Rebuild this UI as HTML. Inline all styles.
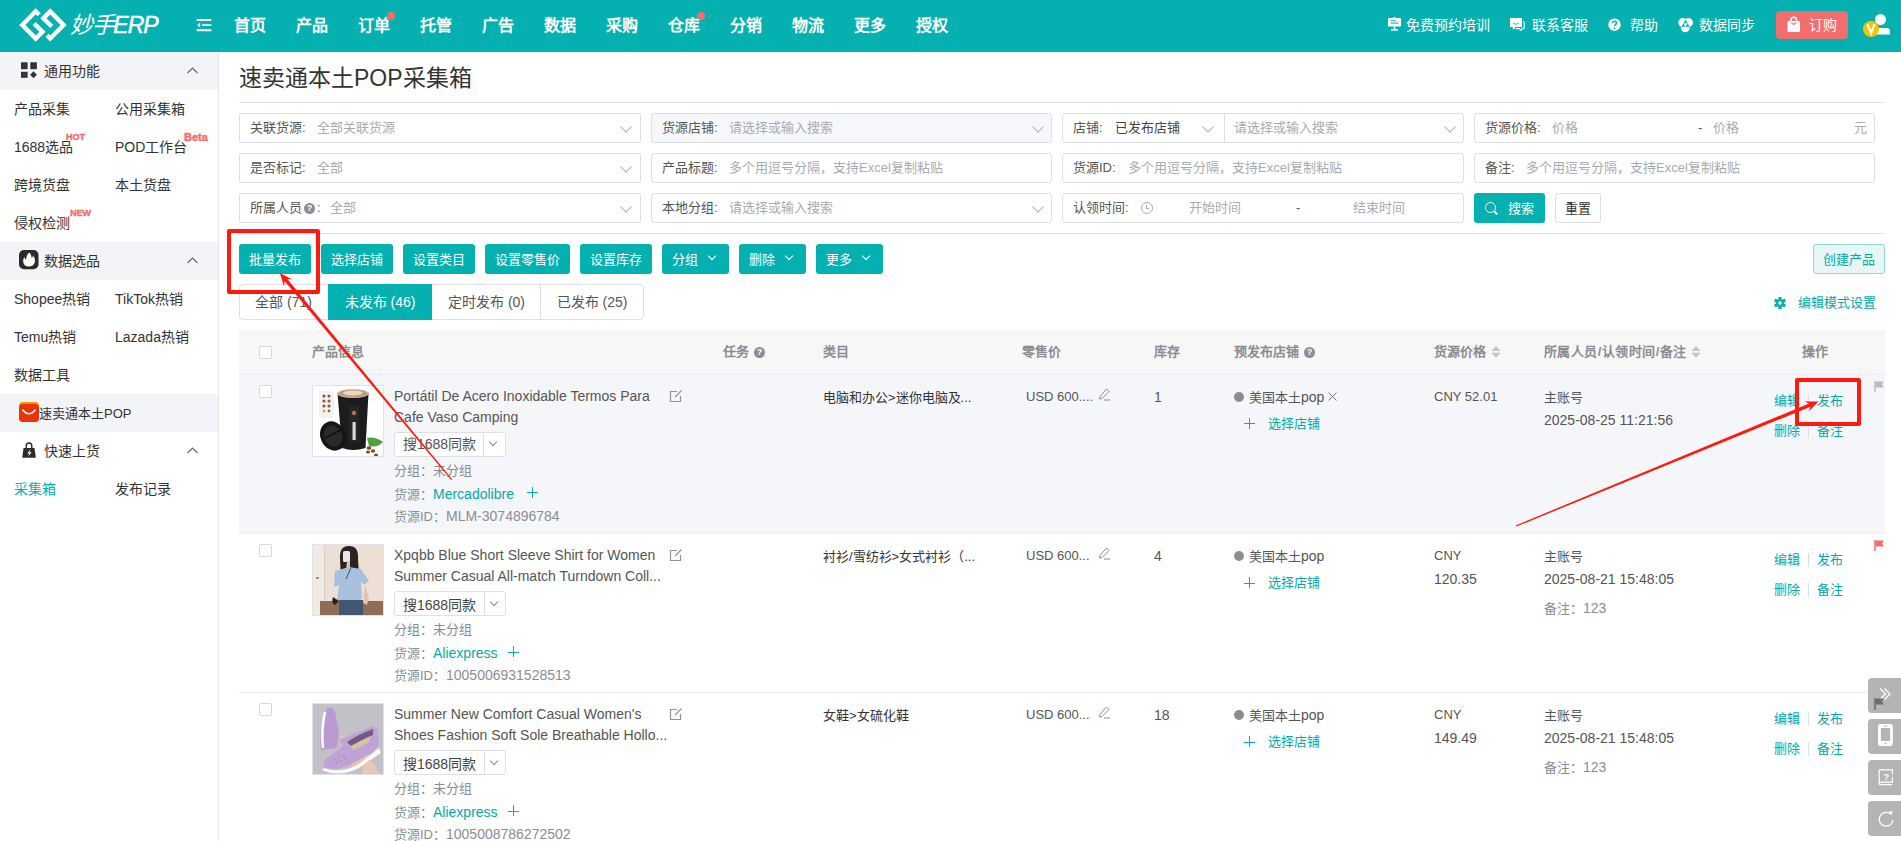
<!DOCTYPE html>
<html lang="zh-CN"><head><meta charset="utf-8">
<style>
*{box-sizing:border-box;margin:0;padding:0}
html,body{width:1901px;height:841px;overflow:hidden;background:#fff;font-family:"Liberation Sans",sans-serif;color:#333;font-size:14px}
.abs{position:absolute}
.t{position:absolute;white-space:nowrap;line-height:1}
#hdr{position:absolute;left:0;top:0;width:1901px;height:52px;background:#05b1b0}
.nav{position:absolute;top:18px;color:#fff;font-size:16px;font-weight:bold;line-height:16px}
.hr{position:absolute;top:18px;color:#fff;font-size:14px;line-height:14px}
#side{position:absolute;left:0;top:52px;width:219px;height:789px;border-right:1px solid #e4e6ec;background:#fff}
.sh{position:absolute;left:0;width:218px;height:38px;background:#f3f4f8}
.si{position:absolute;font-size:14px;line-height:14px;color:#333;white-space:nowrap}
.box{position:absolute;height:30px;border:1px solid #dcdfe6;border-radius:3px;background:#fff}
.lbl{position:absolute;top:7px;font-size:13px;line-height:14px;color:#555;white-space:nowrap}
.ph{position:absolute;top:7px;font-size:13px;line-height:14px;color:#a8abb2;white-space:nowrap}
.chev{position:absolute;top:9px;width:8px;height:8px;border-right:1px solid #b0b3b8;border-bottom:1px solid #b0b3b8;transform:rotate(45deg)}
.btn{position:absolute;top:244px;height:30px;background:#05b1b0;color:#fff;border-radius:3px;font-size:13px;line-height:32px;text-align:center;white-space:nowrap}
.tab{position:absolute;top:284px;height:36px;font-size:14px;line-height:36px;text-align:center;color:#555;white-space:nowrap}
.th{position:absolute;top:345px;font-size:13px;line-height:14px;color:#8a8d93;font-weight:bold;white-space:nowrap}
.cb{position:absolute;width:13px;height:13px;border:1px solid #d5d8de;border-radius:2px;background:#fff}
.c13{position:absolute;font-size:13px;line-height:14px;color:#333;white-space:nowrap}
.g13{position:absolute;font-size:13px;line-height:14px;color:#888;white-space:nowrap}
.tl{color:#05b1b0}
.fb{position:absolute;left:1868px;width:33px;height:35px;background:#b4b4b4;border-radius:4px 0 0 4px}
</style></head>
<body>
<!-- HEADER -->
<div id="hdr">
  <svg class="abs" style="left:0;top:0" width="80" height="52" viewBox="0 0 80 52"><g fill="none" stroke="#fff" stroke-width="4.4" stroke-linejoin="miter" stroke-miterlimit="10"><path d="M39.2,14.8 L35.7,11.3 L22.3,25 L35.7,38.6 L42.5,31.8 L34.2,23.5"/><path d="M47.1,35.4 L50.2,38.5 L63.6,25 L50.2,11.4 L43.4,18.2 L51.7,26.5"/></g></svg>
  <div class="t" style="left:70px;top:14px;color:#fff;font-size:23px;font-style:italic;letter-spacing:-1.4px">妙手<span style="-webkit-text-stroke:0.5px #fff;letter-spacing:-0.9px">ERP</span></div>
  <svg class="abs" style="left:196px;top:18px" width="16" height="14" viewBox="0 0 16 14"><g fill="#fff"><rect x="0.5" y="1" width="15" height="2" rx="0.8"/><rect x="6" y="6.2" width="9.5" height="1.8" rx="0.8"/><rect x="0.5" y="11.2" width="15" height="2" rx="0.8"/><path d="M1 7.1 L4.2 4.8 V9.4Z"/></g></svg>
  
  <div class="nav" style="left:234px">首页</div>
  <div class="nav" style="left:296px">产品</div>
  <div class="nav" style="left:358px">订单</div>
  <div class="abs" style="left:387px;top:12px;width:8px;height:8px;border-radius:50%;background:#f26d6d"></div>
  <div class="nav" style="left:420px">托管</div>
  <div class="nav" style="left:482px">广告</div>
  <div class="nav" style="left:544px">数据</div>
  <div class="nav" style="left:606px">采购</div>
  <div class="nav" style="left:668px">仓库</div>
  <div class="abs" style="left:697px;top:12px;width:8px;height:8px;border-radius:50%;background:#f26d6d"></div>
  <div class="nav" style="left:730px">分销</div>
  <div class="nav" style="left:792px">物流</div>
  <div class="nav" style="left:854px">更多</div>
  <div class="nav" style="left:916px">授权</div>

  <div class="abs" style="left:1776px;top:11px;width:72px;height:28px;background:#f26d6d;border-radius:4px"></div>

  <svg class="abs" style="left:1388px;top:17px" width="13" height="14" viewBox="0 0 13 14"><rect x="0" y="1" width="13" height="8.5" rx="1" fill="#fff"/><rect x="5.5" y="0" width="2" height="1.5" fill="#fff"/><rect x="2.5" y="3.2" width="5" height="1" fill="#05b1b0"/><rect x="2.5" y="5.6" width="8" height="1" fill="#05b1b0"/><rect x="5.7" y="9.5" width="1.6" height="3" fill="#fff"/><rect x="3" y="12" width="7" height="1.6" fill="#fff"/></svg>
  <svg class="abs" style="left:1509px;top:17px" width="17" height="15" viewBox="0 0 17 15"><path d="M14 4.2 Q15.2 4.4 15.2 5.8 V10.6 Q15.2 11.6 14.2 11.6 H13.2 L12.2 13.4 L10.2 11.6 H6.5" fill="none" stroke="#fff" stroke-width="1.1"/><path d="M1 1 H13 V10 H6.6 L4 13 L3.6 10 H1Z" fill="#fff"/><path d="M4.3 6.2 Q7 8.4 9.7 6.2" fill="none" stroke="#05b1b0" stroke-width="0.9"/></svg>
  <svg class="abs" style="left:1608px;top:18px" width="14" height="14" viewBox="0 0 14 14"><circle cx="6.5" cy="6.7" r="6.2" fill="#fff"/><path d="M4.6 5.2 Q4.6 3.3 6.5 3.3 Q8.4 3.3 8.4 5 Q8.4 6.2 7.2 6.8 Q6.5 7.2 6.5 8.2" fill="none" stroke="#05b1b0" stroke-width="1.5"/><circle cx="6.5" cy="10.1" r="0.9" fill="#05b1b0"/></svg>
  <svg class="abs" style="left:1677px;top:18px" width="17" height="15" viewBox="0 0 17 15"><g fill="#fff"><circle cx="5.8" cy="4.6" r="4.5"/><circle cx="11.5" cy="4.6" r="4.5"/><circle cx="8.3" cy="9.8" r="4.4"/></g><path d="M8.5 1.8 L12.7 8.8 H4.3Z" fill="#05b1b0"/><path d="M8.5 8.8 L6.4 5.3 H10.6Z" fill="#fff"/></svg>
  <svg class="abs" style="left:1787px;top:16px" width="14" height="17" viewBox="0 0 14 17"><rect x="0.5" y="5" width="12.5" height="11" rx="0.8" fill="#fff"/><path d="M4 5.5 V4 Q4 1.2 6.75 1.2 Q9.5 1.2 9.5 4 V5.5" fill="none" stroke="#fff" stroke-width="1.6"/><path d="M4.3 6.5 Q6.75 10 9.2 6.5" fill="none" stroke="#f26d6d" stroke-width="1.3"/></svg>
  <svg class="abs" style="left:1862px;top:12px" width="30" height="28" viewBox="0 0 30 28"><circle cx="18.5" cy="7.5" r="5.5" fill="#fff"/><path d="M14.5 16 H25 Q28 16 28 19.5 V22.5 H14.5Z" fill="#fff"/><circle cx="9" cy="17" r="8" fill="#f6c400"/><path d="M5.5 12.2 L9 21.5 L12.5 12.2" fill="none" stroke="#fff" stroke-width="2.2" stroke-linejoin="miter"/></svg>
  <div class="hr" style="left:1406px">免费预约培训</div>
  <div class="hr" style="left:1532px">联系客服</div>
  <div class="hr" style="left:1630px">帮助</div>
  <div class="hr" style="left:1699px">数据同步</div>
  <div class="hr" style="left:1809px">订购</div>
</div>

<!-- SIDEBAR -->
<div id="side">
  <div class="sh" style="top:0"></div>

  <div class="si" style="left:44px;top:12px">通用功能</div>
  <div class="si" style="left:14px;top:50px">产品采集</div>
  <div class="si" style="left:115px;top:50px">公用采集箱</div>
  <div class="si" style="left:14px;top:88px">1688选品</div>
  <div class="si" style="left:115px;top:88px">POD工作台</div>
  <div class="si" style="left:14px;top:126px">跨境货盘</div>
  <div class="si" style="left:115px;top:126px">本土货盘</div>
  <div class="si" style="left:14px;top:164px">侵权检测</div>
  <div class="sh" style="top:190px"></div>
  <div class="si" style="left:44px;top:202px">数据选品</div>
  <div class="si" style="left:14px;top:240px">Shopee热销</div>
  <div class="si" style="left:115px;top:240px">TikTok热销</div>
  <div class="si" style="left:14px;top:278px">Temu热销</div>
  <div class="si" style="left:115px;top:278px">Lazada热销</div>
  <div class="si" style="left:14px;top:316px">数据工具</div>
  <div class="sh" style="top:342px"></div>
  <div class="si" style="left:39px;top:355px;font-size:13px">速卖通本土POP</div>
  <div class="si" style="left:44px;top:392px">快速上货</div>
  <div class="si tl" style="left:14px;top:430px">采集箱</div>
  <div class="si" style="left:115px;top:430px">发布记录</div>

  <svg class="abs" style="left:21px;top:10px" width="16" height="16" viewBox="0 0 16 16"><rect x="0" y="0.3" width="6.6" height="6.9" fill="#333"/><rect x="9.3" y="0.3" width="6.6" height="6.9" fill="#333"/><rect x="0" y="9.8" width="6.6" height="6" fill="#333"/><path d="M12.5 9.3 L15.9 12.8 L12.5 16.2 L9.1 12.8Z" fill="#333"/></svg>
  <svg class="abs" style="left:19px;top:198px" width="20" height="20" viewBox="0 0 20 20"><rect x="0" y="0" width="19.5" height="19.3" rx="5" fill="#2b2b2b"/><path d="M10.5 2.5 Q13 6 12.5 8 Q14 7 14 5.5 Q17 9 15.5 13 Q14 16.5 9.8 16.5 Q5.5 16.5 4.5 13 Q3.5 9.5 5.5 7 Q5.5 9 7 9.5 Q7 5 10.5 2.5Z" fill="#fff"/></svg>
  <svg class="abs" style="left:19px;top:350px" width="20" height="20" viewBox="0 0 20 20"><rect x="0" y="0" width="20" height="20" rx="4" fill="#ff9a00"/><rect x="0" y="2" width="20" height="18" rx="4" fill="#e8340a"/><path d="M3.5 7.5 Q10 16 16.5 7.5" fill="none" stroke="#fff" stroke-width="1.6"/></svg>
  <svg class="abs" style="left:22px;top:390px" width="14" height="16" viewBox="0 0 14 16"><path d="M4.2 6 V4 Q4.2 1 7 1 Q9.8 1 9.8 4 V6" fill="none" stroke="#2b2b2b" stroke-width="1.4"/><path d="M1.5 6 H12.5 L13.8 15.8 H0.2Z" fill="#2b2b2b"/><path d="M8.6 7 L5.2 11.6 H7.4 L6 15 L9.6 10.2 H7.4Z" fill="#fff"/></svg>
  <svg class="abs" style="left:187px;top:15px" width="11" height="7" viewBox="0 0 11 7"><path d="M0.5 6 L5.5 1 L10.5 6" fill="none" stroke="#666" stroke-width="1.1"/></svg>
  <svg class="abs" style="left:187px;top:205px" width="11" height="7" viewBox="0 0 11 7"><path d="M0.5 6 L5.5 1 L10.5 6" fill="none" stroke="#666" stroke-width="1.1"/></svg>
  <svg class="abs" style="left:187px;top:395px" width="11" height="7" viewBox="0 0 11 7"><path d="M0.5 6 L5.5 1 L10.5 6" fill="none" stroke="#666" stroke-width="1.1"/></svg>
  <div class="abs" style="left:66px;top:81px;font-size:9px;line-height:9px;font-weight:bold;color:#f56c6c;white-space:nowrap;-webkit-text-stroke:0.4px #f56c6c">HOT</div>
  <div class="abs" style="left:184px;top:80px;font-size:11px;line-height:11px;font-weight:bold;color:#f56c6c;white-space:nowrap;-webkit-text-stroke:0.4px #f56c6c">Beta</div>
  <div class="abs" style="left:70px;top:157px;font-size:9px;line-height:9px;font-weight:bold;color:#f56c6c;white-space:nowrap;-webkit-text-stroke:0.4px #f56c6c">NEW</div>
</div>

<!-- MAIN -->
<div class="t" style="left:239px;top:67px;font-size:23px;color:#333">速卖通本土POP采集箱</div>
<div class="abs" style="left:239px;top:102px;width:1646px;height:1px;background:#dfe2e8"></div>


<!-- FILTERS -->
<div class="box" style="left:239px;top:113px;width:402px"><div class="lbl" style="left:10px">关联货源:</div><div class="ph" style="left:77px">全部关联货源</div><div class="chev" style="left:382px"></div></div>
<div class="box" style="left:651px;top:113px;width:401px;background:#f5f7fa"><div class="lbl" style="left:10px">货源店铺:</div><div class="ph" style="left:77px">请选择或输入搜索</div><div class="chev" style="left:382px"></div></div>
<div class="box" style="left:1062px;top:113px;width:402px"><div class="lbl" style="left:10px">店铺:</div><div class="lbl" style="left:52px;color:#444">已发布店铺</div><div class="chev" style="left:141px"></div><div class="abs" style="left:161px;top:0;width:1px;height:28px;background:#dcdfe6"></div><div class="ph" style="left:171px">请选择或输入搜索</div><div class="chev" style="left:383px"></div></div>
<div class="box" style="left:1474px;top:113px;width:401px"><div class="lbl" style="left:10px">货源价格:</div><div class="ph" style="left:77px">价格</div><div class="lbl" style="left:223px;color:#555">-</div><div class="ph" style="left:238px">价格</div><div class="ph" style="left:379px">元</div></div>

<div class="box" style="left:239px;top:153px;width:402px"><div class="lbl" style="left:10px">是否标记:</div><div class="ph" style="left:77px">全部</div><div class="chev" style="left:382px"></div></div>
<div class="box" style="left:651px;top:153px;width:401px"><div class="lbl" style="left:10px">产品标题:</div><div class="ph" style="left:77px">多个用逗号分隔，支持Excel复制粘贴</div></div>
<div class="box" style="left:1062px;top:153px;width:402px"><div class="lbl" style="left:10px">货源ID:</div><div class="ph" style="left:65px">多个用逗号分隔，支持Excel复制粘贴</div></div>
<div class="box" style="left:1474px;top:153px;width:401px"><div class="lbl" style="left:10px">备注:</div><div class="ph" style="left:51px">多个用逗号分隔，支持Excel复制粘贴</div></div>

<div class="box" style="left:239px;top:193px;width:402px"><div class="lbl" style="left:10px">所属人员</div><div class="abs" style="left:64px;top:9px;width:11px;height:11px;border-radius:50%;background:#8a8d93;color:#fff;font-size:9px;line-height:11px;text-align:center;font-weight:bold">?</div><div class="lbl" style="left:77px">:</div><div class="ph" style="left:90px">全部</div><div class="chev" style="left:382px"></div></div>
<div class="box" style="left:651px;top:193px;width:401px"><div class="lbl" style="left:10px">本地分组:</div><div class="ph" style="left:77px">请选择或输入搜索</div><div class="chev" style="left:382px"></div></div>
<div class="box" style="left:1062px;top:193px;width:402px"><div class="lbl" style="left:10px">认领时间:</div><div class="abs" style="left:78px;top:8px;width:12px;height:12px;border:1px solid #a8abb2;border-radius:50%"></div><div class="abs" style="left:83px;top:11px;width:3px;height:4px;border-left:1px solid #a8abb2;border-bottom:1px solid #a8abb2"></div><div class="ph" style="left:126px">开始时间</div><div class="lbl" style="left:233px;color:#555">-</div><div class="ph" style="left:290px">结束时间</div></div>
<div class="abs" style="left:1474px;top:193px;width:71px;height:30px;background:#05b1b0;border-radius:3px"><div class="abs" style="left:11px;top:9px;width:11px;height:11px;border:1.5px solid #fff;border-radius:50%"></div><div class="abs" style="left:20px;top:19px;width:4px;height:1.5px;background:#fff;transform:rotate(45deg)"></div><div class="lbl" style="left:34px;top:9px;color:#fff">搜索</div></div>
<div class="box" style="left:1555px;top:193px;width:46px"><div class="lbl" style="left:9px;top:8px;color:#333">重置</div></div>

<div class="abs" style="left:239px;top:233px;width:1646px;height:1px;background:#dfe2e8"></div>

<!-- ACTION BUTTONS -->
<div class="btn" style="left:239px;width:72px">批量发布</div>
<div class="btn" style="left:321px;width:72px">选择店铺</div>
<div class="btn" style="left:403px;width:72px">设置类目</div>
<div class="btn" style="left:485px;width:85px">设置零售价</div>
<div class="btn" style="left:580px;width:72px">设置库存</div>
<div class="btn" style="left:662px;width:67px;text-align:left;padding-left:10px">分组<div class="chev" style="left:47px;top:9px;width:6px;height:6px;border-color:#fff"></div></div>
<div class="btn" style="left:739px;width:67px;text-align:left;padding-left:10px">删除<div class="chev" style="left:47px;top:9px;width:6px;height:6px;border-color:#fff"></div></div>
<div class="btn" style="left:816px;width:67px;text-align:left;padding-left:10px">更多<div class="chev" style="left:47px;top:9px;width:6px;height:6px;border-color:#fff"></div></div>
<div class="abs" style="left:1813px;top:244px;width:72px;height:30px;background:#e7f7f7;border:1px solid #8fd9d8;border-radius:3px;color:#05a9a8;font-size:13px;line-height:30px;text-align:center">创建产品</div>

<!-- TABS -->
<div class="abs" style="left:239px;top:284px;width:405px;height:36px;border:1px solid #dcdfe6;border-radius:4px"></div>
<div class="tab" style="left:239px;width:89px">全部 (71)</div>
<div class="tab" style="left:328px;width:104px;background:#05b1b0;color:#fff">未发布 (46)</div>
<div class="tab" style="left:432px;width:109px">定时发布 (0)</div>
<div class="abs" style="left:540px;top:285px;width:1px;height:34px;background:#dcdfe6"></div>
<div class="tab" style="left:541px;width:102px">已发布 (25)</div>
<svg class="abs" style="left:1774px;top:297px" width="12" height="12" viewBox="0 0 13 13"><g fill="#05b1b0"><circle cx="6.5" cy="6.5" r="4.6"/><rect x="4.8" y="-0.2" width="3.4" height="3.2" rx="0.6" transform="rotate(0 6.5 6.5)"/><rect x="4.8" y="-0.2" width="3.4" height="3.2" rx="0.6" transform="rotate(60 6.5 6.5)"/><rect x="4.8" y="-0.2" width="3.4" height="3.2" rx="0.6" transform="rotate(120 6.5 6.5)"/><rect x="4.8" y="-0.2" width="3.4" height="3.2" rx="0.6" transform="rotate(180 6.5 6.5)"/><rect x="4.8" y="-0.2" width="3.4" height="3.2" rx="0.6" transform="rotate(240 6.5 6.5)"/><rect x="4.8" y="-0.2" width="3.4" height="3.2" rx="0.6" transform="rotate(300 6.5 6.5)"/></g><circle cx="6.5" cy="6.5" r="1.9" fill="#fff"/></svg>
<div class="t" style="left:1798px;top:296px;font-size:13px;color:#05a9a8">编辑模式设置</div>

<!-- TABLE HEADER -->
<div class="abs" style="left:239px;top:330px;width:1646px;height:45px;background:#f7f7f8;border-bottom:1px solid #e9ecf2"></div>
<div class="cb" style="left:259px;top:346px"></div>
<div class="th" style="left:312px">产品信息</div>
<div class="th" style="left:723px">任务</div>
<div class="abs" style="left:754px;top:347px;width:11px;height:11px;border-radius:50%;background:#8a8d93;color:#fff;font-size:9px;line-height:11px;text-align:center;font-weight:bold">?</div>
<div class="th" style="left:823px">类目</div>
<div class="th" style="left:1022px">零售价</div>
<div class="th" style="left:1154px">库存</div>
<div class="th" style="left:1234px">预发布店铺</div>
<div class="abs" style="left:1304px;top:347px;width:11px;height:11px;border-radius:50%;background:#8a8d93;color:#fff;font-size:9px;line-height:11px;text-align:center;font-weight:bold">?</div>
<div class="th" style="left:1434px">货源价格</div>
<svg class="abs" style="left:1491px;top:346px" width="10" height="12" viewBox="0 0 10 12"><path d="M5 0 L9.5 5 H0.5Z M5 12 L9.5 6.8 H0.5Z" fill="#c0c4cc"/></svg>
<div class="th" style="left:1544px;letter-spacing:0.45px">所属人员/认领时间/备注</div>
<svg class="abs" style="left:1691px;top:346px" width="10" height="12" viewBox="0 0 10 12"><path d="M5 0 L9.5 5 H0.5Z M5 12 L9.5 6.8 H0.5Z" fill="#c0c4cc"/></svg>
<div class="th" style="left:1802px">操作</div>

<div class="abs" style="left:239px;top:375px;width:1646px;height:159px;background:#f5f6fa;border-bottom:1px solid #ebeef5"></div>
<div class="cb" style="left:259px;top:385px"></div>
<div class="abs" style="left:312px;top:385px;width:72px;height:72px;border:1px solid #dfe2ea;background:#fff;overflow:hidden"><svg width="70" height="70" viewBox="0 0 70 70"><rect width="70" height="70" fill="#fff"/><rect x="6.5" y="5.5" width="14" height="26" rx="3" fill="#f3f3f3" stroke="#e8e8e8" stroke-width="0.5"/><g fill="#8a5a3a"><circle cx="11" cy="10" r="1.6"/><circle cx="16" cy="10" r="1.6"/><circle cx="11" cy="15" r="1.6"/><circle cx="16" cy="15" r="1.6"/><circle cx="11" cy="20" r="1.6"/><circle cx="16" cy="20" r="1.6"/><circle cx="11" cy="25" r="1.4" fill="#d9a030"/><circle cx="16" cy="25" r="1.4" fill="#6a7a3a"/></g><path d="M24.5 7 L55.5 7 L52.5 62 Q40 66 29 62 Z" fill="#1c1c1e"/><ellipse cx="40" cy="7.5" rx="15.8" ry="4.6" fill="#bdbdbd"/><ellipse cx="40" cy="7.5" rx="14" ry="3.6" fill="#c49a6c"/><ellipse cx="40" cy="7" rx="10" ry="2.4" fill="#e9d6bc"/><rect x="36" y="20" width="10" height="36" rx="2" fill="#262628"/><circle cx="41" cy="27" r="2.2" fill="#b8704a"/><rect x="39.5" y="36" width="3.2" height="18" fill="#d8d8d8"/><ellipse cx="20" cy="50" rx="12.5" ry="15" transform="rotate(-25 20 50)" fill="#151517"/><ellipse cx="20" cy="50" rx="9" ry="11" transform="rotate(-25 20 50)" fill="#2a2a2c"/><path d="M12 52 L28 44" stroke="#111" stroke-width="1.5"/><path d="M54 52 Q62 50 70 56 Q64 62 56 60Z" fill="#4fa23a"/><g fill="#7a4a2a"><ellipse cx="56" cy="62" rx="2.4" ry="1.8"/><ellipse cx="60" cy="65" rx="2.2" ry="1.7"/><ellipse cx="55" cy="66" rx="2" ry="1.6"/><ellipse cx="63" cy="69" rx="2" ry="1.5"/></g></svg></div>
<div class="t" style="left:394px;top:389px;font-size:14px;color:#555">Portátil De Acero Inoxidable Termos Para</div>
<div class="t" style="left:394px;top:410px;font-size:14px;color:#555">Cafe Vaso Camping</div>
<svg class="abs" style="left:669px;top:390px" width="14" height="13" viewBox="0 0 14 13"><path d="M8 1.5 H1.5 V11.5 H11.5 V6" fill="none" stroke="#909399" stroke-width="1.2"/><path d="M6 7 L12.5 0.5" stroke="#909399" stroke-width="1.2"/></svg>
<div class="abs" style="left:394px;top:432px;width:112px;height:25px;border:1px solid #dcdfe6;border-radius:3px;background:#fff"><div class="t" style="left:8px;top:4px;font-size:14px;color:#555">搜1688同款</div><div class="abs" style="left:88px;top:0;width:1px;height:23px;background:#dcdfe6"></div><div class="chev" style="left:95px;top:6px;width:6px;height:6px;border-color:#8a8d93"></div></div>
<div class="t" style="left:394px;top:464px;font-size:13px;color:#8a8d93">分组：未分组</div>
<div class="t" style="left:394px;top:487px;font-size:13px;color:#8a8d93">货源：<span style="color:#05a9a8;font-size:14px">Mercadolibre</span></div>
<div class="abs" style="left:527px;top:487px;width:11px;height:11px"><div class="abs" style="left:5px;top:0;width:1.2px;height:11px;background:#05b1b0"></div><div class="abs" style="left:0;top:5px;width:11px;height:1.2px;background:#05b1b0"></div></div>
<div class="t" style="left:394px;top:509px;font-size:13px;color:#8a8d93">货源ID：<span style="font-size:14px">MLM-3074896784</span></div>
<div class="t" style="left:823px;top:391px;font-size:13px;color:#333">电脑和办公&gt;迷你电脑及...</div>
<div class="t" style="left:1026px;top:390px;font-size:13px;color:#555">USD 600....</div>
<svg class="abs" style="left:1098px;top:388px" width="13" height="13" viewBox="0 0 13 13"><path d="M8.5 1 L11 3.5 L4 10.5 L1.5 11 L2 8.5 Z" fill="none" stroke="#8a8d93" stroke-width="1"/><path d="M6 12 H12" stroke="#8a8d93" stroke-width="1"/></svg>
<div class="t" style="left:1154px;top:390px;font-size:14px;color:#555">1</div>
<div class="abs" style="left:1234px;top:392px;width:10px;height:10px;border-radius:50%;background:#8a8d93"></div>
<div class="t" style="left:1249px;top:390px;font-size:14px;color:#555"><span style="font-size:13px">美国本土</span>pop</div><svg class="abs" style="left:1328px;top:392px" width="9" height="9" viewBox="0 0 9 9"><path d="M0.5 0.5 L8.5 8.5 M8.5 0.5 L0.5 8.5" stroke="#777" stroke-width="1"/></svg>
<div class="abs" style="left:1244px;top:418px;width:11px;height:11px"><div class="abs" style="left:5px;top:0;width:1.2px;height:11px;background:#05b1b0"></div><div class="abs" style="left:0;top:5px;width:11px;height:1.2px;background:#05b1b0"></div></div>
<div class="t" style="left:1268px;top:417px;font-size:13px;color:#05a9a8">选择店铺</div>
<div class="t" style="left:1434px;top:390px;font-size:13px;color:#555">CNY 52.01</div>
<div class="t" style="left:1434px;top:413px;font-size:14px;color:#555"></div>
<div class="t" style="left:1544px;top:391px;font-size:13px;color:#555">主账号</div>
<div class="t" style="left:1544px;top:413px;font-size:14px;color:#555">2025-08-25 11:21:56</div>
<div class="t" style="left:1544px;top:442px;font-size:13px;color:#8a8d93"></div>
<div class="t" style="left:1774px;top:394px;font-size:13px;color:#05a9a8">编辑</div>
<div class="abs" style="left:1808px;top:394px;width:1px;height:14px;background:#dcdfe6"></div>
<div class="t" style="left:1817px;top:394px;font-size:13px;color:#05a9a8">发布</div>
<div class="t" style="left:1774px;top:424px;font-size:13px;color:#05a9a8">删除</div>
<div class="abs" style="left:1808px;top:424px;width:1px;height:14px;background:#dcdfe6"></div>
<div class="t" style="left:1817px;top:424px;font-size:13px;color:#05a9a8">备注</div>
<svg class="abs" style="left:1874px;top:381px" width="11" height="11" viewBox="0 0 11 11"><path d="M1 0 V11" stroke="#b8bbc2" stroke-width="1.5"/><path d="M1.5 0.5 H10 L8 3.5 L10 6.5 H1.5Z" fill="#b8bbc2"/></svg>

<div class="abs" style="left:239px;top:534px;width:1646px;height:159px;background:#fff;border-bottom:1px solid #ebeef5"></div>
<div class="cb" style="left:259px;top:544px"></div>
<div class="abs" style="left:312px;top:544px;width:72px;height:72px;border:1px solid #dfe2ea;background:#fff;overflow:hidden"><svg width="70" height="70" viewBox="0 0 70 70"><rect width="70" height="70" fill="#ece0d4"/><rect x="0" y="0" width="11" height="70" fill="#f1ebe4"/><rect x="11" y="0" width="1" height="70" fill="#d8cfc5"/><rect x="3" y="32" width="3" height="2" fill="#9a8f86"/><path d="M7 56 L70 56 L70 70 L7 70Z" fill="#8e6d56"/><path d="M27 14 Q26 1 36 1 Q46 1 45 14 L46 30 L40 32 L32 30 L28 34Z" fill="#2a2320"/><rect x="30" y="6" width="7" height="11" rx="1.5" fill="#ece6e4"/><path d="M34 16 L33 26 L37 26 L37 16Z" fill="#e2c3ad"/><path d="M22 26 L36 22 L48 24 L56 36 L51 40 L48 36 L49 54 L40 57 L24 56 L26 40 L21 42Z" fill="#a8c0dd"/><path d="M52 40 L56 52 L54 60 L50 58 L51 48Z" fill="#e2c3ad"/><path d="M20 52 Q18 58 22 60 L26 56Z" fill="#222"/><rect x="26" y="55" width="24" height="15" fill="#3f5873"/><path d="M38 23 L33 34" stroke="#2c3440" stroke-width="0.8"/></svg></div>
<div class="t" style="left:394px;top:548px;font-size:14px;color:#555">Xpqbb Blue Short Sleeve Shirt for Women</div>
<div class="t" style="left:394px;top:569px;font-size:14px;color:#555">Summer Casual All-match Turndown Coll...</div>
<svg class="abs" style="left:669px;top:549px" width="14" height="13" viewBox="0 0 14 13"><path d="M8 1.5 H1.5 V11.5 H11.5 V6" fill="none" stroke="#909399" stroke-width="1.2"/><path d="M6 7 L12.5 0.5" stroke="#909399" stroke-width="1.2"/></svg>
<div class="abs" style="left:394px;top:591px;width:112px;height:25px;border:1px solid #dcdfe6;border-radius:3px;background:#fff"><div class="t" style="left:8px;top:6px;font-size:14px;color:#444">搜1688同款</div><div class="abs" style="left:89px;top:0;width:1px;height:23px;background:#dcdfe6"></div><div class="chev" style="left:96px;top:7px;width:6px;height:6px;border-color:#8a8d93"></div></div>
<div class="t" style="left:394px;top:623px;font-size:13px;color:#8a8d93">分组：未分组</div>
<div class="t" style="left:394px;top:646px;font-size:13px;color:#8a8d93">货源：<span style="color:#05a9a8;font-size:14px">Aliexpress</span></div>
<div class="abs" style="left:508px;top:646px;width:11px;height:11px"><div class="abs" style="left:5px;top:0;width:1.2px;height:11px;background:#05b1b0"></div><div class="abs" style="left:0;top:6px;width:11px;height:1.2px;background:#05b1b0"></div></div>
<div class="t" style="left:394px;top:668px;font-size:13px;color:#8a8d93">货源ID：<span style="font-size:14px">1005006931528513</span></div>
<div class="t" style="left:823px;top:550px;font-size:13px;color:#333">衬衫/雪纺衫&gt;女式衬衫（...</div>
<div class="t" style="left:1026px;top:549px;font-size:13px;color:#555">USD 600...</div>
<svg class="abs" style="left:1098px;top:547px" width="13" height="13" viewBox="0 0 13 13"><path d="M8.5 1 L11 3.5 L4 10.5 L1.5 11 L2 8.5 Z" fill="none" stroke="#8a8d93" stroke-width="1"/><path d="M6 12 H12" stroke="#8a8d93" stroke-width="1"/></svg>
<div class="t" style="left:1154px;top:549px;font-size:14px;color:#555">4</div>
<div class="abs" style="left:1234px;top:551px;width:10px;height:10px;border-radius:50%;background:#8a8d93"></div>
<div class="t" style="left:1249px;top:549px;font-size:14px;color:#555"><span style="font-size:13px">美国本土</span>pop</div>
<div class="abs" style="left:1244px;top:577px;width:11px;height:11px"><div class="abs" style="left:5px;top:0;width:1.2px;height:11px;background:#05b1b0"></div><div class="abs" style="left:0;top:6px;width:11px;height:1.2px;background:#05b1b0"></div></div>
<div class="t" style="left:1268px;top:576px;font-size:13px;color:#05a9a8">选择店铺</div>
<div class="t" style="left:1434px;top:549px;font-size:13px;color:#555">CNY</div>
<div class="t" style="left:1434px;top:572px;font-size:14px;color:#555">120.35</div>
<div class="t" style="left:1544px;top:550px;font-size:13px;color:#555">主账号</div>
<div class="t" style="left:1544px;top:572px;font-size:14px;color:#555">2025-08-21 15:48:05</div>
<div class="t" style="left:1544px;top:601px;font-size:13px;color:#8a8d93">备注：<span style="font-size:14px">123</span></div>
<div class="t" style="left:1774px;top:553px;font-size:13px;color:#05a9a8">编辑</div>
<div class="abs" style="left:1808px;top:553px;width:1px;height:14px;background:#dcdfe6"></div>
<div class="t" style="left:1817px;top:553px;font-size:13px;color:#05a9a8">发布</div>
<div class="t" style="left:1774px;top:583px;font-size:13px;color:#05a9a8">删除</div>
<div class="abs" style="left:1808px;top:583px;width:1px;height:14px;background:#dcdfe6"></div>
<div class="t" style="left:1817px;top:583px;font-size:13px;color:#05a9a8">备注</div>
<svg class="abs" style="left:1874px;top:540px" width="11" height="11" viewBox="0 0 11 11"><path d="M1 0 V11" stroke="#f26d6d" stroke-width="1.5"/><path d="M1.5 0.5 H10 L8 3.5 L10 6.5 H1.5Z" fill="#f26d6d"/></svg>

<div class="abs" style="left:239px;top:693px;width:1646px;height:159px;background:#fff;border-bottom:1px solid #ebeef5"></div>
<div class="cb" style="left:259px;top:703px"></div>
<div class="abs" style="left:312px;top:703px;width:72px;height:72px;border:1px solid #dfe2ea;background:#fff;overflow:hidden"><svg width="70" height="70" viewBox="0 0 70 70"><rect width="70" height="70" fill="#c2c2c6"/><path d="M14 4 Q19 2 22 7 L26 30 L24 44 L8 46 Q5 28 14 4Z" fill="#b99ad3"/><path d="M12 8 Q8 26 10 44" stroke="#fff" stroke-width="2.5" fill="none"/><path d="M26 30 L48 42 L60 54 L44 64 Q36 62 30 50Z" fill="#e5c4b0"/><path d="M26 36 Q44 28 60 22 L64 24 L66 40 L60 48 L42 58 Q24 68 12 64 Q8 58 14 54 L30 42Z" fill="#bfa2d8"/><path d="M34 38 Q46 30 60 25 L60 31 Q46 37 38 42Z" fill="#735a80"/><path d="M38 42 Q46 38 58 32 L56 38 Q46 44 40 46Z" fill="#d8c2a2"/><g fill="#9b82b0"><circle cx="22" cy="56" r="0.8"/><circle cx="26" cy="54" r="0.8"/><circle cx="30" cy="52" r="0.8"/><circle cx="24" cy="59" r="0.8"/><circle cx="28" cy="57" r="0.8"/><circle cx="32" cy="55" r="0.8"/></g><path d="M11 64 Q28 70 46 60 L66 44 L68 49 L46 64 Q26 74 9 66Z" fill="#fafafa"/><path d="M56 56 Q62 60 64 66 L68 70 L50 70 Q48 64 52 60Z" fill="#e8c7b5"/></svg></div>
<div class="t" style="left:394px;top:707px;font-size:14px;color:#555">Summer New Comfort Casual Women's</div>
<div class="t" style="left:394px;top:728px;font-size:14px;color:#555">Shoes Fashion Soft Sole Breathable Hollo...</div>
<svg class="abs" style="left:669px;top:708px" width="14" height="13" viewBox="0 0 14 13"><path d="M8 1.5 H1.5 V11.5 H11.5 V6" fill="none" stroke="#909399" stroke-width="1.2"/><path d="M6 7 L12.5 0.5" stroke="#909399" stroke-width="1.2"/></svg>
<div class="abs" style="left:394px;top:750px;width:112px;height:25px;border:1px solid #dcdfe6;border-radius:3px;background:#fff"><div class="t" style="left:8px;top:6px;font-size:14px;color:#444">搜1688同款</div><div class="abs" style="left:89px;top:0;width:1px;height:23px;background:#dcdfe6"></div><div class="chev" style="left:96px;top:7px;width:6px;height:6px;border-color:#8a8d93"></div></div>
<div class="t" style="left:394px;top:782px;font-size:13px;color:#8a8d93">分组：未分组</div>
<div class="t" style="left:394px;top:805px;font-size:13px;color:#8a8d93">货源：<span style="color:#05a9a8;font-size:14px">Aliexpress</span></div>
<div class="abs" style="left:508px;top:805px;width:11px;height:11px"><div class="abs" style="left:5px;top:0;width:1.2px;height:11px;background:#05b1b0"></div><div class="abs" style="left:0;top:6px;width:11px;height:1.2px;background:#05b1b0"></div></div>
<div class="t" style="left:394px;top:827px;font-size:13px;color:#8a8d93">货源ID：<span style="font-size:14px">1005008786272502</span></div>
<div class="t" style="left:823px;top:709px;font-size:13px;color:#333">女鞋&gt;女硫化鞋</div>
<div class="t" style="left:1026px;top:708px;font-size:13px;color:#555">USD 600...</div>
<svg class="abs" style="left:1098px;top:706px" width="13" height="13" viewBox="0 0 13 13"><path d="M8.5 1 L11 3.5 L4 10.5 L1.5 11 L2 8.5 Z" fill="none" stroke="#8a8d93" stroke-width="1"/><path d="M6 12 H12" stroke="#8a8d93" stroke-width="1"/></svg>
<div class="t" style="left:1154px;top:708px;font-size:14px;color:#555">18</div>
<div class="abs" style="left:1234px;top:710px;width:10px;height:10px;border-radius:50%;background:#8a8d93"></div>
<div class="t" style="left:1249px;top:708px;font-size:14px;color:#555"><span style="font-size:13px">美国本土</span>pop</div>
<div class="abs" style="left:1244px;top:736px;width:11px;height:11px"><div class="abs" style="left:5px;top:0;width:1.2px;height:11px;background:#05b1b0"></div><div class="abs" style="left:0;top:6px;width:11px;height:1.2px;background:#05b1b0"></div></div>
<div class="t" style="left:1268px;top:735px;font-size:13px;color:#05a9a8">选择店铺</div>
<div class="t" style="left:1434px;top:708px;font-size:13px;color:#555">CNY</div>
<div class="t" style="left:1434px;top:731px;font-size:14px;color:#555">149.49</div>
<div class="t" style="left:1544px;top:709px;font-size:13px;color:#555">主账号</div>
<div class="t" style="left:1544px;top:731px;font-size:14px;color:#555">2025-08-21 15:48:05</div>
<div class="t" style="left:1544px;top:760px;font-size:13px;color:#8a8d93">备注：<span style="font-size:14px">123</span></div>
<div class="t" style="left:1774px;top:712px;font-size:13px;color:#05a9a8">编辑</div>
<div class="abs" style="left:1808px;top:712px;width:1px;height:14px;background:#dcdfe6"></div>
<div class="t" style="left:1817px;top:712px;font-size:13px;color:#05a9a8">发布</div>
<div class="t" style="left:1774px;top:742px;font-size:13px;color:#05a9a8">删除</div>
<div class="abs" style="left:1808px;top:742px;width:1px;height:14px;background:#dcdfe6"></div>
<div class="t" style="left:1817px;top:742px;font-size:13px;color:#05a9a8">备注</div>
<svg class="abs" style="left:1874px;top:699px" width="11" height="11" viewBox="0 0 11 11"><path d="M1 0 V11" stroke="#b8bbc2" stroke-width="1.5"/><path d="M1.5 0.5 H10 L8 3.5 L10 6.5 H1.5Z" fill="#b8bbc2"/></svg>

<!-- FLOAT BUTTONS -->
<div class="fb" style="top:678px"></div>
<div class="fb" style="top:719px"></div>
<div class="fb" style="top:760px"></div>
<div class="fb" style="top:801px"></div>

<svg class="abs" style="left:1868px;top:678px" width="33" height="160" viewBox="0 0 33 160">
<path d="M12 10.5 L17.5 16 L12 21.5 M16.5 10.5 L22 16 L16.5 21.5" fill="none" stroke="#fff" stroke-width="1.3"/>
<rect x="10.1" y="46.1" width="14.7" height="21.8" rx="2.2" fill="#fff"/><rect x="12.9" y="50" width="9.2" height="13" fill="#b4b4b4"/><rect x="15.5" y="47.6" width="4" height="0.9" fill="#b4b4b4"/><circle cx="17.5" cy="65.4" r="1" fill="#b4b4b4"/>
<path d="M11.2 91.8 H24.4 V96.5 M24.4 99 V104.2 H12.2 Q11.2 104.2 11.2 105.3 Q11.2 106.6 12.2 106.6 H24.4" fill="none" stroke="#fff" stroke-width="1.2"/><path d="M11.2 91.8 V105.5" stroke="#fff" stroke-width="1.2"/><text x="18.3" y="101.8" font-size="9.5" font-family="Liberation Sans" fill="#fff" text-anchor="middle" font-weight="bold">?</text>
<path d="M25.0 142.1 A6.9 6.9 0 1 1 21.4 135.2" fill="none" stroke="#fff" stroke-width="1.3"/><path d="M20.3 133.7 L24.6 133.3 L23.4 137.6Z" fill="#fff"/>
</svg>

<svg class="abs" style="left:1874px;top:698px" width="11" height="12" viewBox="0 0 11 12"><path d="M1 0 V12" stroke="#6e6e6e" stroke-width="1.6"/><path d="M1.5 0.5 H10 L8 3.5 L10 6.5 H1.5Z" fill="#6e6e6e"/></svg>
<!-- ANNOTATIONS -->
<div class="abs" style="left:227px;top:229px;width:93px;height:65px;border:4px solid #ff1a10;border-radius:2px"></div>
<div class="abs" style="left:1795px;top:378px;width:66px;height:48px;border:4px solid #ff1a10;border-radius:2px"></div>
<svg class="abs" style="left:0;top:0" width="1901" height="841" viewBox="0 0 1901 841">
<path d="M452.2 479.3 L287.3 279.1 L292.4 279.4 L279.9 272.9 L284.0 286.4 L284.7 281.3 L451.2 480.1Z" fill="#ff1a10"/>
<path d="M1516.4 526.5 L1810.4 406.7 L1808.6 411.5 L1818.5 401.5 L1804.4 401.4 L1809.1 403.5 L1516.0 525.3Z" fill="#ff1a10"/>
</svg>

</body></html>
